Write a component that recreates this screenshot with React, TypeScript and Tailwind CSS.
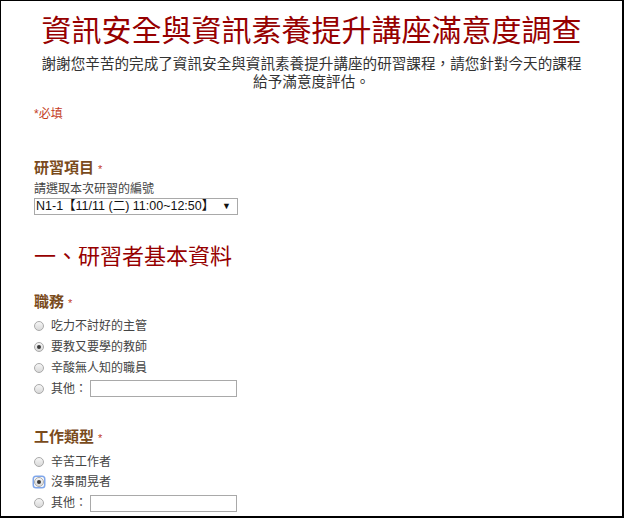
import React from "react";

const FONT = { fontFamily: '"Liberation Sans", "Noto Sans CJK TC", sans-serif' };

function Radio({ checked = false, focused = false }: { checked?: boolean; focused?: boolean }) {
  return (
    <span
      className={
        focused
          ? "flex h-[10px] w-[10px] shrink-0 items-center justify-center rounded-[2px] ring-[1.5px] ring-[#7fa6ea]"
          : "flex h-[10px] w-[10px] shrink-0 items-center justify-center"
      }
    >
      <span className="flex h-[10px] w-[10px] items-center justify-center rounded-full border border-[#a9a9a9] bg-gradient-to-b from-[#f6f6f6] to-[#d9d9d9]">
        {checked ? <span className="h-[4px] w-[4px] rounded-full bg-[#3a3a3a]" /> : null}
      </span>
    </span>
  );
}

function Option({
  label,
  checked,
  focused,
  other,
}: {
  label: string;
  checked?: boolean;
  focused?: boolean;
  other?: boolean;
}) {
  return (
    <div className="flex h-[20.8px] items-center">
      <Radio checked={checked} focused={focused} />
      <span className="ml-[7px] text-[12px] leading-[14px] text-[#444]">{label}</span>
      {other ? (
        <span className="ml-[3px] h-[17px] w-[147px] border border-[#a9a9a9] bg-white" />
      ) : null}
    </div>
  );
}

function Heading({ children }: { children: React.ReactNode }) {
  return (
    <div className="flex h-[20px] items-baseline text-[15px] font-bold leading-[20px] text-[#7a4b1c]">
      <span>{children}</span>
      <span className="ml-[4px] text-[11px] font-normal leading-[20px] text-[#c43b1d]">*</span>
    </div>
  );
}

export default function App() {
  return (
    <div
      className="h-[518px] w-[624px] overflow-hidden border-l border-t border-r-2 border-b-2 border-black bg-white"
      style={FONT}
    >
      <div className="pt-[12px] text-center text-[30px] leading-[36px] text-[#960000]">
        資訊安全與資訊素養提升講座滿意度調查
      </div>
      <div className="mt-[6px] text-center text-[14.6px] leading-[18px] text-[#333]">
        謝謝您辛苦的完成了資訊安全與資訊素養提升講座的研習課程，請您針對今天的課程
        <br />
        給予滿意度評估。
      </div>

      <div className="pl-[33px]">
        <div className="mt-[15px] text-[12px] leading-[16px] text-[#c43b1d]">*必填</div>

        <div className="mt-[36px]">
          <Heading>研習項目</Heading>
          <div className="mt-[4px] text-[12px] leading-[14px] text-[#444]">請選取本次研習的編號</div>
          <div className="mt-[2px] flex h-[17px] w-[204px] items-center justify-between border border-[#a9a9a9] bg-white pl-[1px] pr-[6px] text-[12.5px] leading-[15px] text-[#111]">
            <span>N1-1【11/11 (二) 11:00~12:50】</span>
            <span className="text-[9px]">▼</span>
          </div>
        </div>

        <div className="mt-[28px] text-[22px] leading-[28px] text-[#960000]">一、研習者基本資料</div>

        <div className="mt-[21px]">
          <Heading>職務</Heading>
          <div className="mt-[4px] flex flex-col">
            <Option label="吃力不討好的主管" />
            <Option label="要教又要學的教師" checked />
            <Option label="辛酸無人知的職員" />
            <Option label="其他：" other />
          </div>
        </div>

        <div className="mt-[28px]">
          <Heading>工作類型</Heading>
          <div className="mt-[4px] flex flex-col">
            <Option label="辛苦工作者" />
            <Option label="沒事閒晃者" checked focused />
            <Option label="其他：" other />
          </div>
        </div>
      </div>
    </div>
  );
}
